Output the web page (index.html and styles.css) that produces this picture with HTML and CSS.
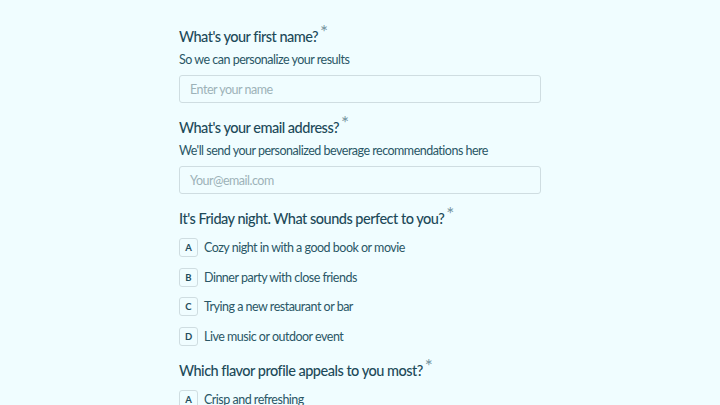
FILE: index.html
```html
<!DOCTYPE html>
<html>
<head>
<meta charset="utf-8">
<link rel="stylesheet" href="styles.css">
</head>
<body>
<main class="form">
  <section class="q">
    <h2 class="q-title">What's your first name?<span class="req">*</span></h2>
    <p class="q-sub">So we can personalize your results</p>
    <div class="input">Enter your name</div>
  </section>
  <section class="q">
    <h2 class="q-title">What's your email address?<span class="req">*</span></h2>
    <p class="q-sub">We'll send your personalized beverage recommendations here</p>
    <div class="input">Your@email.com</div>
  </section>
  <section class="q">
    <h2 class="q-title">It's Friday night. What sounds perfect to you?<span class="req">*</span></h2>
    <ul class="opts">
      <li class="opt"><span class="key">A</span><span class="label">Cozy night in with a good book or movie</span></li>
      <li class="opt"><span class="key">B</span><span class="label">Dinner party with close friends</span></li>
      <li class="opt"><span class="key">C</span><span class="label">Trying a new restaurant or bar</span></li>
      <li class="opt"><span class="key">D</span><span class="label">Live music or outdoor event</span></li>
    </ul>
  </section>
  <section class="q">
    <h2 class="q-title">Which flavor profile appeals to you most?<span class="req">*</span></h2>
    <ul class="opts">
      <li class="opt"><span class="key">A</span><span class="label">Crisp and refreshing</span></li>
    </ul>
  </section>
</main>
</body>
</html>
```
FILE: styles.css
```css
html, body {
  margin: 0;
  padding: 0;
  background: #f0fdff;
  height: 100%;
  overflow: hidden;
}
body {
  font-family: "Lato", sans-serif;
  color: #1f4d5c;
}
.form {
  width: 362px;
  margin-left: 179px;
  padding-top: 27px;
  display: flex;
  flex-direction: column;
  gap: 15px;
}
.q {
  display: flex;
  flex-direction: column;
}
.q-title {
  margin: 0;
  font-size: 14.5px;
  font-weight: 500;
  line-height: 20px;
  letter-spacing: -0.5px;
  color: #1d4a59;
}
.req {
  color: #7594a0;
  font-size: 19px;
  font-weight: 400;
  line-height: 0;
  vertical-align: 3px;
  margin-left: 2px;
}
.q-sub {
  margin: 4px 0 0;
  font-size: 12.5px;
  line-height: 18px;
  letter-spacing: -0.5px;
  color: #2a5766;
}
.input {
  margin-top: 6px;
  height: 28px;
  box-sizing: border-box;
  border: 1px solid #cfdde1;
  border-radius: 3px;
  padding: 0 10px;
  display: flex;
  align-items: center;
  font-size: 12.5px;
  letter-spacing: -0.5px;
  color: #9db2b8;
}
.opts {
  list-style: none;
  margin: 9px 0 0;
  padding: 0;
  display: flex;
  flex-direction: column;
  gap: 10.7px;
}
.opt {
  display: flex;
  align-items: center;
  gap: 6px;
  height: 19px;
}
.key {
  width: 19px;
  height: 19px;
  box-sizing: border-box;
  border: 1px solid #cfdde1;
  border-radius: 3px;
  display: flex;
  align-items: center;
  justify-content: center;
  font-size: 9.5px;
  font-weight: 700;
  color: #1f4d5c;
}
.label {
  font-size: 12.5px;
  letter-spacing: -0.5px;
  color: #2a5766;
}
```
